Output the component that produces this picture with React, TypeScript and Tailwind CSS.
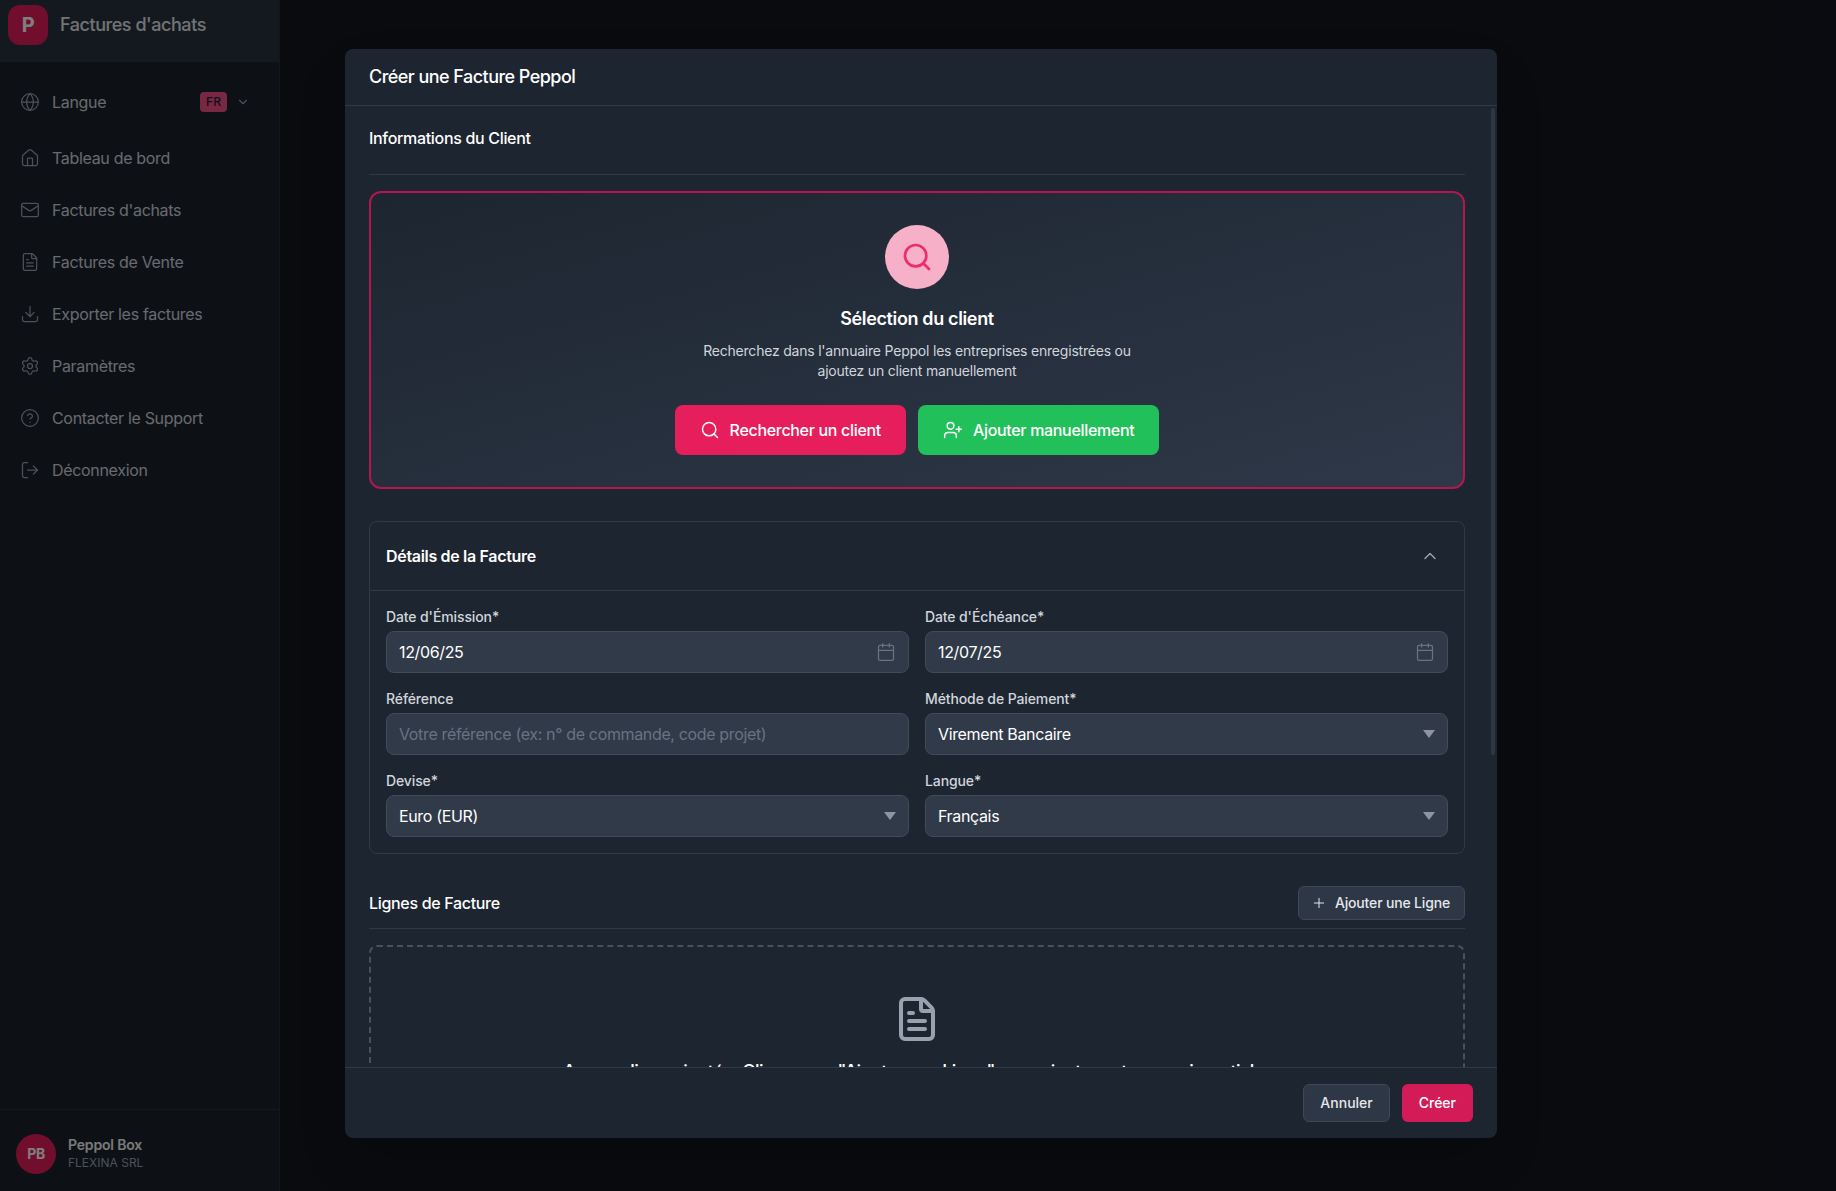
import { ReactNode } from 'react';
import {
  Calendar,
  ChevronDown,
  ChevronUp,
  CircleHelp,
  Download,
  FileText,
  Globe,
  House,
  LogOut,
  Mail,
  Plus,
  Search,
  Settings,
  UserPlus,
} from 'lucide-react';

const navItems = [
  { label: 'Tableau de bord', icon: House },
  { label: "Factures d'achats", icon: Mail },
  { label: 'Factures de Vente', icon: FileText },
  { label: 'Exporter les factures', icon: Download },
  { label: 'Paramètres', icon: Settings },
  { label: 'Contacter le Support', icon: CircleHelp },
  { label: 'Déconnexion', icon: LogOut },
];

function Sidebar() {
  return (
    <aside className="w-[280px] h-full flex flex-col shrink-0 bg-[#1b222c] border-r border-[#262d38]">
      <div className="h-[62px] shrink-0 flex items-start gap-3 pl-2 pt-[5px] bg-[#29323e] border-b border-[#2e3641]">
        <div className="w-10 h-10 rounded-xl bg-[#e21d5b] flex items-center justify-center text-xl font-bold text-white">P</div>
        <span className="text-lg font-medium tracking-[-0.025em] text-gray-200 leading-10">Factures d'achats</span>
      </div>
      <nav className="flex-1 pt-4 px-5">
        <div className="h-12 mb-2 flex items-center gap-3 text-gray-300">
          <Globe size={20} strokeWidth={1.5} className="text-gray-400" />
          <span className="flex-1">Langue</span>
          <div className="flex items-center gap-[9px] mr-[9px]">
            <span className="w-[27px] h-5 rounded bg-[#f25088] text-[#251a2c] text-xs font-medium tracking-normal flex items-center justify-center">FR</span>
            <ChevronDown size={14} className="text-gray-400" />
          </div>
        </div>
        <ul className="flex flex-col gap-1">
          {navItems.map((item) => (
            <li key={item.label} className="h-12 flex items-center gap-3 text-gray-300">
              <item.icon size={20} strokeWidth={1.5} className="text-gray-400" />
              <span>{item.label}</span>
            </li>
          ))}
        </ul>
      </nav>
      <div className="border-t border-[#2b323d] px-4 pt-6 pb-[17px] flex items-center gap-3">
        <div className="w-10 h-10 rounded-full bg-[#e21d5b] flex items-center justify-center text-sm font-bold text-white">PB</div>
        <div>
          <div className="text-sm font-semibold tracking-[-0.012em] text-gray-100 leading-[18px]">Peppol Box</div>
          <div className="text-xs tracking-normal text-gray-400 leading-[18px]">FLEXINA SRL</div>
        </div>
      </div>
    </aside>
  );
}

function Field({ label, children }: { label: string; children: ReactNode }) {
  return (
    <div>
      <label className="block mb-1 text-sm font-medium tracking-[-0.008em] leading-5 text-gray-300">{label}</label>
      {children}
    </div>
  );
}

const inputClass =
  'w-full h-[42px] px-3 rounded-lg bg-[#303a49] border border-[#404b5b] text-white text-base tracking-[-0.022em] outline-none placeholder:text-gray-500 appearance-none';

function DateField({ label, value }: { label: string; value: string }) {
  return (
    <Field label={label}>
      <div className="relative">
        <input className={inputClass} defaultValue={value} readOnly />
        <Calendar size={20} strokeWidth={1.5} className="absolute right-[13px] top-[11px] text-gray-500" />
      </div>
    </Field>
  );
}

function SelectField({ label, value }: { label: string; value: string }) {
  return (
    <Field label={label}>
      <div className="relative">
        <select className={inputClass} defaultValue={value}>
          <option>{value}</option>
        </select>
        <svg width="12" height="8" viewBox="0 0 12 8" className="absolute right-[13px] top-[17px]">
          <path d="M0 0h12L6 8z" fill="#8f95a0" />
        </svg>
      </div>
    </Field>
  );
}

function ClientCard() {
  return (
    <div className="mb-8 p-8 rounded-xl border-2 border-[#b3174f] bg-gradient-to-br from-[#1d2530] to-[#2e3848] flex flex-col items-center text-center">
      <div className="w-16 h-16 mb-4 rounded-full bg-[#f6b0c8] flex items-center justify-center">
        <Search size={32} className="text-[#ee2c6c]" />
      </div>
      <h3 className="mb-2 text-lg font-semibold tracking-[-0.02em] leading-7 text-white">Sélection du client</h3>
      <p className="mb-6 max-w-md text-sm tracking-[-0.015em] leading-5 text-gray-300">
        Recherchez dans l'annuaire Peppol les entreprises enregistrées ou ajoutez un client manuellement
      </p>
      <div className="flex gap-3">
        <button className="h-[50px] px-[25px] rounded-lg bg-[#e61e5c] text-white font-medium flex items-center gap-[10px]">
          <Search size={20} strokeWidth={1.75} />
          Rechercher un client
        </button>
        <button className="h-[50px] px-[25px] rounded-lg bg-[#22c05a] text-white font-medium flex items-center gap-[10px]">
          <UserPlus size={20} strokeWidth={1.75} />
          Ajouter manuellement
        </button>
      </div>
    </div>
  );
}

function InvoiceDetails() {
  return (
    <div className="mb-8 rounded-lg border border-[#2f3a48]">
      <div className="h-[69px] px-4 flex items-center justify-between border-b border-[#2f3a48]">
        <h3 className="font-semibold text-white">Détails de la Facture</h3>
        <ChevronUp size={20} strokeWidth={1.75} className="mr-2 text-gray-400" />
      </div>
      <div className="p-4 grid grid-cols-2 gap-4">
        <DateField label="Date d'Émission*" value="12/06/25" />
        <DateField label="Date d'Échéance*" value="12/07/25" />
        <Field label="Référence">
          <input className={inputClass} placeholder="Votre référence (ex: n° de commande, code projet)" />
        </Field>
        <SelectField label="Méthode de Paiement*" value="Virement Bancaire" />
        <SelectField label="Devise*" value="Euro (EUR)" />
        <SelectField label="Langue*" value="Français" />
      </div>
    </div>
  );
}

function InvoiceLines() {
  return (
    <div>
      <div className="pb-2 mb-4 flex items-center justify-between border-b border-[#2f3a48]">
        <h3 className="font-medium text-white">Lignes de Facture</h3>
        <button className="h-[34px] pl-3 pr-[14px] rounded-md bg-[#2d3746] border border-[#3d4858] text-sm font-medium tracking-[-0.012em] text-gray-200 flex items-center gap-2">
          <Plus size={16} strokeWidth={1.5} />
          Ajouter une Ligne
        </button>
      </div>
      <div className="p-12 rounded-lg border-2 border-dashed border-[#465162] flex flex-col items-center text-center">
        <FileText size={48} strokeWidth={2} className="mb-[15px] text-gray-400" />
        <p className="mr-[7px] text-lg font-medium tracking-[-0.03em] leading-7 text-white">
          Aucune ligne ajoutée. Cliquez sur "Ajouter une Ligne" pour ajouter votre premier article
        </p>
      </div>
    </div>
  );
}

export default function App() {
  return (
    <div className="relative w-[1836px] h-[1191px] flex overflow-hidden bg-[#13161f] tracking-[-0.02em] font-['Inter','Noto_Sans',sans-serif]">
      <Sidebar />
      <main className="flex-1" />

      <div className="absolute inset-0 bg-black/50 pl-[345px] pt-[49px]">
        <div className="w-[1152px] h-[1089px] rounded-lg bg-[#1d2530] shadow-2xl flex flex-col overflow-hidden">
          <header className="h-[57px] shrink-0 px-6 flex items-center border-b border-[#2f3a48]">
            <h2 className="text-lg font-medium tracking-[-0.03em] text-white">Créer une Facture Peppol</h2>
          </header>

          <div className="relative flex-1 overflow-hidden pl-6 pr-8 pt-5">
            <div className="pb-6 mb-4 border-b border-[#2f3a48]">
              <h3 className="font-medium leading-6 text-white">Informations du Client</h3>
            </div>
            <ClientCard />
            <InvoiceDetails />
            <InvoiceLines />
            <div className="absolute right-[2px] top-[2px] w-1 h-[647px] rounded-full bg-[#2d3744]" />
          </div>

          <footer className="shrink-0 px-6 py-4 flex justify-end gap-3 border-t border-[#2f3a48]">
            <button className="h-[38px] px-4 rounded-md bg-[#2d3746] border border-[#3d4858] text-sm font-medium tracking-normal text-gray-200">Annuler</button>
            <button className="h-[38px] px-[17px] rounded-md bg-[#d31c57] text-sm font-medium tracking-normal text-white">Créer</button>
          </footer>
        </div>
      </div>
    </div>
  );
}
